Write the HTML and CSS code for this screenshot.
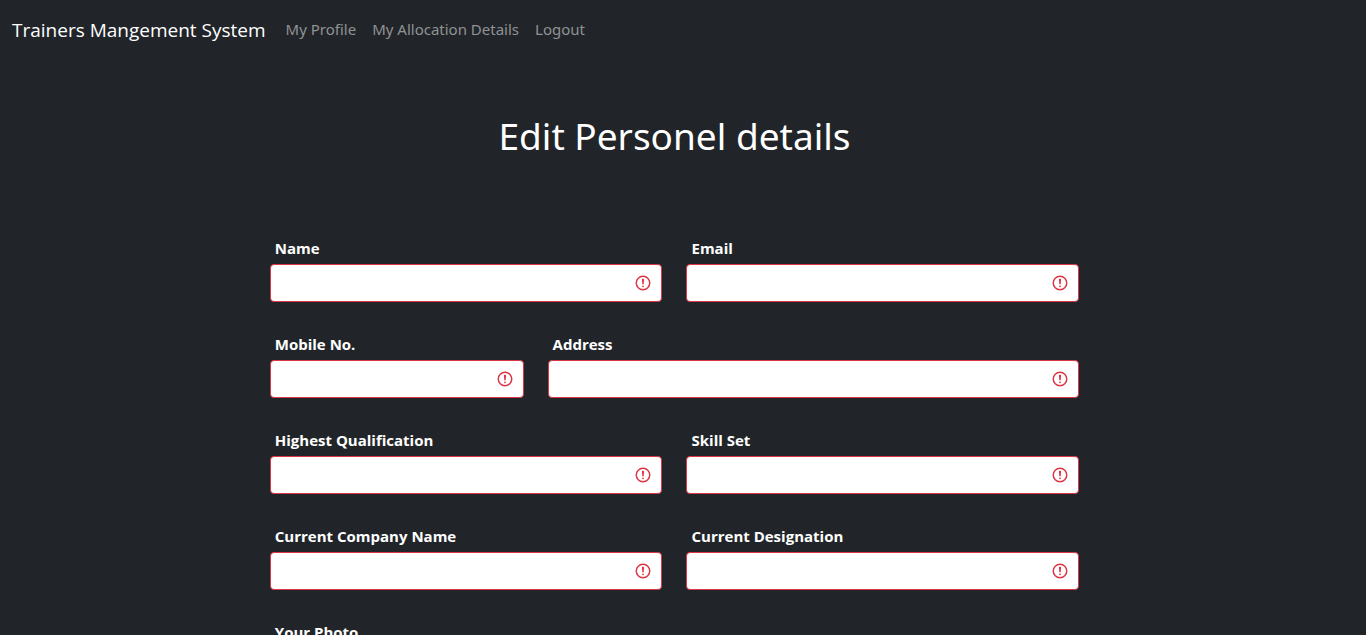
FILE: index.html
```
<!DOCTYPE html>
<html lang="en">
<head>
<meta charset="utf-8">
<meta name="viewport" content="width=device-width, initial-scale=1">
<title>Trainers Mangement System</title>
<link rel="stylesheet" href="styles.css">
</head>
<body>
<div class="page">
  <nav class="navbar">
    <a class="brand" href="#">Trainers Mangement System</a>
    <a class="nav-link" href="#">My Profile</a>
    <a class="nav-link" href="#">My Allocation Details</a>
    <a class="nav-link" href="#">Logout</a>
  </nav>
  <main class="content">
    <h1 class="title">Edit Personel details</h1>
    <form class="form">
      <div class="field half"><label class="label" for="name">Name</label><input class="control" id="name" type="text"></div>
      <div class="field half"><label class="label" for="email">Email</label><input class="control" id="email" type="email"></div>
      <div class="field third"><label class="label" for="mobile">Mobile No.</label><input class="control" id="mobile" type="tel"></div>
      <div class="field wide"><label class="label" for="address">Address</label><input class="control" id="address" type="text"></div>
      <div class="field half"><label class="label" for="qualification">Highest Qualification</label><input class="control" id="qualification" type="text"></div>
      <div class="field half"><label class="label" for="skills">Skill Set</label><input class="control" id="skills" type="text"></div>
      <div class="field half"><label class="label" for="company">Current Company Name</label><input class="control" id="company" type="text"></div>
      <div class="field half"><label class="label" for="designation">Current Designation</label><input class="control" id="designation" type="text"></div>
      <div class="field half"><label class="label" for="photo">Your Photo</label><input class="control" id="photo" type="file"></div>
    </form>
  </main>
</div>
</body>
</html>
```
FILE: styles.css
```
* { box-sizing: border-box; }

body {
  margin: 0;
  background: #212529;
  color: #fff;
  font: 16px/24px "Segoe UI", "Noto Sans", "Open Sans", sans-serif;
}

.page {
  height: 100vh;
  padding-right: 17px;
  overflow-y: auto;
  scrollbar-width: none;
}

.navbar {
  display: flex;
  align-items: center;
  padding: 8px 12px;
}

.brand {
  margin-right: 12px;
  padding: 7px 0;
  color: #fff;
  font-family: "Segoe UI", "Open Sans", "Noto Sans", sans-serif;
  font-size: 19px;
  line-height: 30px;
  text-decoration: none;
}

.nav-link {
  padding: 7px 8px 9px;
  color: #909294;
  font-size: 15px;
  text-decoration: none;
}

.title {
  margin: 52px 0 76px;
  font-size: 37px;
  font-weight: 400;
  line-height: 48px;
  text-align: center;
}

.form {
  display: grid;
  grid-template-columns: repeat(12, minmax(0, 1fr));
  gap: 30px 24px;
  width: 60%;
  margin: 0 auto;
  padding-bottom: 48px;
}

.field {
  display: flex;
  flex-direction: column;
  gap: 4px;
}

.third { grid-column: span 4; }
.half { grid-column: span 6; }
.wide { grid-column: span 8; }

.label {
  padding-left: 5px;
  font-family: "Segoe UI", "Open Sans", "Noto Sans", sans-serif;
  font-size: 15px;
  font-weight: 700;
}

.control {
  width: 100%;
  height: 38px;
  padding: 6px 36px 6px 12px;
  border: 1px solid #dc3545;
  border-radius: 4px;
  background: #fff url("data:image/svg+xml,%3Csvg xmlns='http://www.w3.org/2000/svg' viewBox='0 0 12 12' fill='none' stroke='%23dc3545'%3E%3Ccircle cx='6' cy='6' r='4.5'/%3E%3Cpath stroke-linejoin='round' d='M5.8 3.6h.4L6 6.5z'/%3E%3Ccircle cx='6' cy='8.2' r='.6' fill='%23dc3545' stroke='none'/%3E%3C/svg%3E") no-repeat right 9px center / 18px 18px;
  color: #212529;
  font: inherit;
}
```
